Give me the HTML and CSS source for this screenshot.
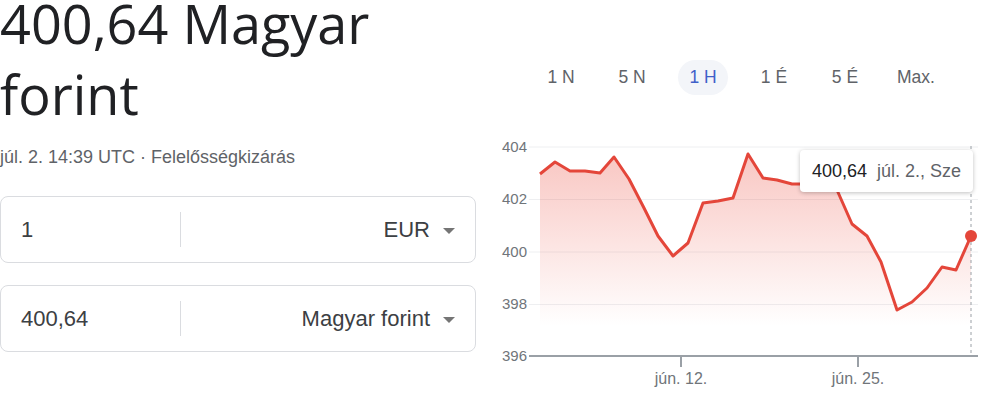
FILE: index.html
```html
<!DOCTYPE html>
<html lang="hu">
<head>
    <meta charset="UTF-8">
    <meta name="viewport" content="width=device-width, initial-scale=1.0">
    <title>EUR - HUF</title>
    <link rel="stylesheet" href="styles.css">
</head>
<body>
    <div class="page">
        <section class="converter">
            <h1 class="rate">400,64 Magyar forint</h1>
            <div class="meta">júl. 2. 14:39 UTC · <a href="#">Felelősségkizárás</a></div>
            <div class="field">
                <div class="amount">1</div>
                <div class="sep"></div>
                <div class="currency">EUR <span class="caret"></span></div>
            </div>
            <div class="field">
                <div class="amount">400,64</div>
                <div class="sep"></div>
                <div class="currency">Magyar forint <span class="caret"></span></div>
            </div>
        </section>
        <section class="chart">
            <div class="ranges">
                <button class="range">1 N</button>
                <button class="range">5 N</button>
                <button class="range active">1 H</button>
                <button class="range">1 É</button>
                <button class="range">5 É</button>
                <button class="range">Max.</button>
            </div>
            <div class="plot">
                <svg class="graph" width="496" height="265" viewBox="496 130 496 265">
                    <defs>
                        <linearGradient id="fade" x1="0" y1="0" x2="0" y2="1">
                            <stop offset="0" stop-color="#ea4335" stop-opacity="0.3"/>
                            <stop offset="0.85" stop-color="#ea4335" stop-opacity="0"/>
                        </linearGradient>
                    </defs>
                    <!-- grid -->
                    <g class="grid">
                        <line x1="529" y1="147" x2="978" y2="147"/>
                        <line x1="529" y1="199.5" x2="978" y2="199.5"/>
                        <line x1="529" y1="252" x2="978" y2="252"/>
                        <line x1="529" y1="304.5" x2="978" y2="304.5"/>
                    </g>
                    <g class="ylabels">
                        <text x="527" y="152">404</text>
                        <text x="527" y="204">402</text>
                        <text x="527" y="257">400</text>
                        <text x="527" y="309">398</text>
                        <text x="527" y="361">396</text>
                    </g>
                    <polygon class="area" fill="url(#fade)" points="540,174 555,162 570,171 585,171 600,173 614,157 629,179 644,208 658,236 673,256 688,243 703,203 718,201 733,198 748,154 763,178 777,180 792,184 807,184 822,185 837,190 852,224 867,236 881,262 897,310 912,302 927,288 942,267 956,270 971,236 971,356 540,356"/>
                    <polyline class="line" points="540,174 555,162 570,171 585,171 600,173 614,157 629,179 644,208 658,236 673,256 688,243 703,203 718,201 733,198 748,154 763,178 777,180 792,184 807,184 822,185 837,190 852,224 867,236 881,262 897,310 912,302 927,288 942,267 956,270 971,236"/>
                    <line class="cursor" x1="971" y1="146" x2="971" y2="356"/>
                    <g class="axis">
                        <line x1="529" y1="356" x2="978" y2="356"/>
                        <line x1="681" y1="356" x2="681" y2="367"/>
                        <line x1="858" y1="356" x2="858" y2="367"/>
                    </g>
                    <g class="xlabels">
                        <text x="681" y="384">jún. 12.</text>
                        <text x="858" y="384">jún. 25.</text>
                    </g>
                    <circle class="dot" cx="971" cy="236" r="6"/>
                </svg>
                <div class="tooltip"><span class="tip-value">400,64</span> <span class="tip-date">júl. 2., Sze</span></div>
            </div>
        </section>
    </div>
</body>
</html>
```

FILE: styles.css
```css
body {
    margin: 0;
    padding: 0;
    background-color: #fff;
    font-family: "Liberation Sans", Arial, sans-serif;
    color: #202124;
}
.page {
    display: flex;
    gap: 20px;
    width: 992px;
}
.converter {
    width: 476px;
}
.rate {
    margin: -12px 0 0;
    font-family: "Open Sans", sans-serif;
    font-weight: 400;
    font-size: 54px;
    line-height: 71px;
    color: #202124;
}
.meta {
    margin-top: 16px;
    font-size: 18px;
    line-height: 22px;
    color: #5f6368;
}
.meta a {
    color: #5f6368;
    text-decoration: none;
}
.field {
    display: flex;
    align-items: center;
    height: 65px;
    margin-top: 22px;
    border: 1px solid #dadce0;
    border-radius: 8px;
    font-size: 22px;
    color: #3c4043;
}
.meta + .field {
    margin-top: 28px;
}
.amount {
    width: 159px;
    padding-left: 20px;
}
.sep {
    width: 1px;
    height: 35px;
    background-color: #dadce0;
}
.currency {
    flex: 1;
    display: flex;
    align-items: center;
    justify-content: flex-end;
    gap: 13px;
    padding-right: 20px;
}
.caret {
    width: 0;
    height: 0;
    border-left: 6px solid transparent;
    border-right: 6px solid transparent;
    border-top: 6px solid #757575;
    margin-top: 2px;
}
.chart {
    width: 496px;
}
.ranges {
    display: flex;
    gap: 21px;
    margin: 60px 0 0 40px;
}
.range {
    width: 50px;
    height: 35px;
    padding: 0;
    border: none;
    border-radius: 18px;
    background: none;
    font-family: "Liberation Sans", Arial, sans-serif;
    font-size: 17.5px;
    color: #5f6368;
    cursor: pointer;
}
.range.active {
    background-color: #f3f5f9;
    color: #3f60c9;
}
.plot {
    position: relative;
    margin-top: 35px;
    height: 265px;
}
.graph {
    display: block;
}
.grid line {
    stroke: #eeeff1;
    stroke-width: 1;
}
.ylabels text {
    font-size: 15px;
    fill: #70757a;
    text-anchor: end;
}
.xlabels text {
    font-size: 16px;
    fill: #70757a;
    text-anchor: middle;
}
.line {
    fill: none;
    stroke: #e4463a;
    stroke-width: 3;
    stroke-linejoin: round;
}
.cursor {
    stroke: #9aa0a6;
    stroke-width: 1;
    stroke-dasharray: 3 3;
}
.axis line {
    stroke: #9aa0a6;
    stroke-width: 2;
}
.dot {
    fill: #e4463a;
}
.tooltip {
    position: absolute;
    left: 304px;
    top: 20px;
    width: 161px;
    height: 42px;
    padding-left: 12px;
    display: flex;
    align-items: center;
    gap: 10px;
    background-color: #fff;
    border-radius: 4px;
    box-shadow: 0 1px 4px rgba(0, 0, 0, 0.25);
    font-size: 18px;
}
.tip-value {
    color: #202124;
}
.tip-date {
    color: #5f6368;
}
```
